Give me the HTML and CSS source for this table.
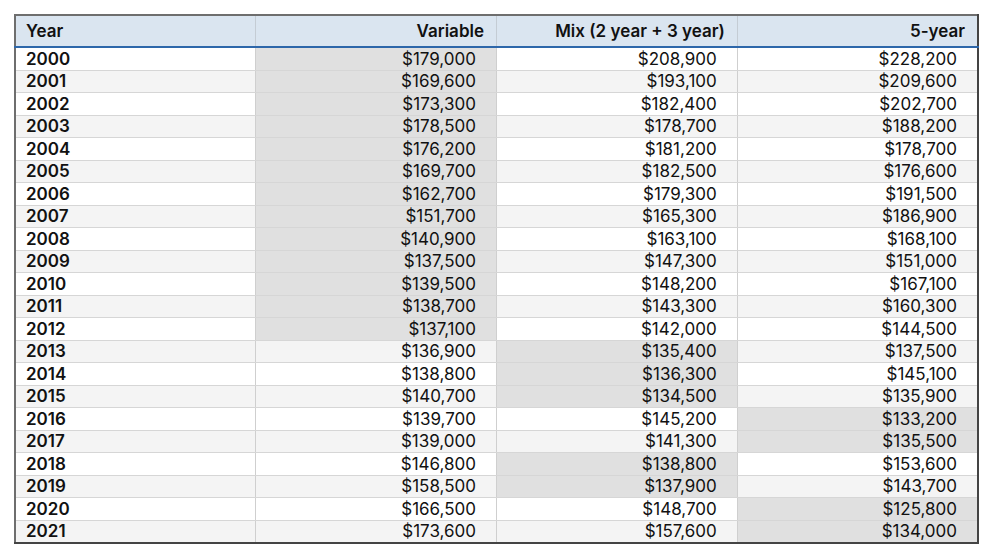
FILE: index.html
```html
<!DOCTYPE html>
<html>
<head>
<meta charset="utf-8">
<link rel="stylesheet" href="styles.css">
</head>
<body>
<div class="wrap">
<table class="grid">
<thead>
<tr><th class="c-year">Year</th><th>Variable</th><th>Mix (2 year + 3 year)</th><th>5-year</th></tr>
</thead>
<tbody>
<tr><td class="y">2000</td><td class="hl">$179,000</td><td>$208,900</td><td>$228,200</td></tr>
<tr><td class="y">2001</td><td class="hl">$169,600</td><td>$193,100</td><td>$209,600</td></tr>
<tr><td class="y">2002</td><td class="hl">$173,300</td><td>$182,400</td><td>$202,700</td></tr>
<tr><td class="y">2003</td><td class="hl">$178,500</td><td>$178,700</td><td>$188,200</td></tr>
<tr><td class="y">2004</td><td class="hl">$176,200</td><td>$181,200</td><td>$178,700</td></tr>
<tr><td class="y">2005</td><td class="hl">$169,700</td><td>$182,500</td><td>$176,600</td></tr>
<tr><td class="y">2006</td><td class="hl">$162,700</td><td>$179,300</td><td>$191,500</td></tr>
<tr><td class="y">2007</td><td class="hl">$151,700</td><td>$165,300</td><td>$186,900</td></tr>
<tr><td class="y">2008</td><td class="hl">$140,900</td><td>$163,100</td><td>$168,100</td></tr>
<tr><td class="y">2009</td><td class="hl">$137,500</td><td>$147,300</td><td>$151,000</td></tr>
<tr><td class="y">2010</td><td class="hl">$139,500</td><td>$148,200</td><td>$167,100</td></tr>
<tr><td class="y">2011</td><td class="hl">$138,700</td><td>$143,300</td><td>$160,300</td></tr>
<tr><td class="y">2012</td><td class="hl">$137,100</td><td>$142,000</td><td>$144,500</td></tr>
<tr><td class="y">2013</td><td>$136,900</td><td class="hl">$135,400</td><td>$137,500</td></tr>
<tr><td class="y">2014</td><td>$138,800</td><td class="hl">$136,300</td><td>$145,100</td></tr>
<tr><td class="y">2015</td><td>$140,700</td><td class="hl">$134,500</td><td>$135,900</td></tr>
<tr><td class="y">2016</td><td>$139,700</td><td>$145,200</td><td class="hl">$133,200</td></tr>
<tr><td class="y">2017</td><td>$139,000</td><td>$141,300</td><td class="hl">$135,500</td></tr>
<tr><td class="y">2018</td><td>$146,800</td><td class="hl">$138,800</td><td>$153,600</td></tr>
<tr><td class="y">2019</td><td>$158,500</td><td class="hl">$137,900</td><td>$143,700</td></tr>
<tr><td class="y">2020</td><td>$166,500</td><td>$148,700</td><td class="hl">$125,800</td></tr>
<tr><td class="y">2021</td><td>$173,600</td><td>$157,600</td><td class="hl">$134,000</td></tr>
</tbody>
</table>
</div>
</body>
</html>
```

FILE: styles.css
```css
html, body {
  margin: 0;
  padding: 0;
  background: #ffffff;
}
.wrap {
  padding: 14px 0 0 14px;
}
.grid {
  border-collapse: collapse;
  width: 965px;
  table-layout: fixed;
  font-family: Inter, "Liberation Sans", sans-serif;
  font-size: 17px;
  color: #111;
  border: 2px solid #6e6e6e;
  border-right-color: #444;
  border-bottom-color: #444;
}
.grid th {
  background: #dae5f0;
  height: 30px;
  padding: 0 12px 0 10px;
  text-align: right;
  font-weight: 600;
  border-left: 1px solid #c4ccd4;
  border-bottom: 2px solid #2d67aa;
  vertical-align: middle;
}
.grid th.c-year {
  text-align: left;
  border-left: none;
}
.grid td {
  height: 21.5px;
  padding: 0 20px 0 10px;
  text-align: right;
  border-left: 1px solid #cfcfcf;
  border-bottom: 1px solid #d6d6d6;
  line-height: 18px;
  vertical-align: middle;
}
.grid td.y {
  text-align: left;
  font-weight: 600;
  border-left: none;
}
.grid tbody tr:nth-child(odd) td {
  background: #ffffff;
}
.grid tbody tr:nth-child(even) td {
  background: #f4f4f4;
}
.grid tbody tr td.hl {
  background: #e0e0e0;
}
```
